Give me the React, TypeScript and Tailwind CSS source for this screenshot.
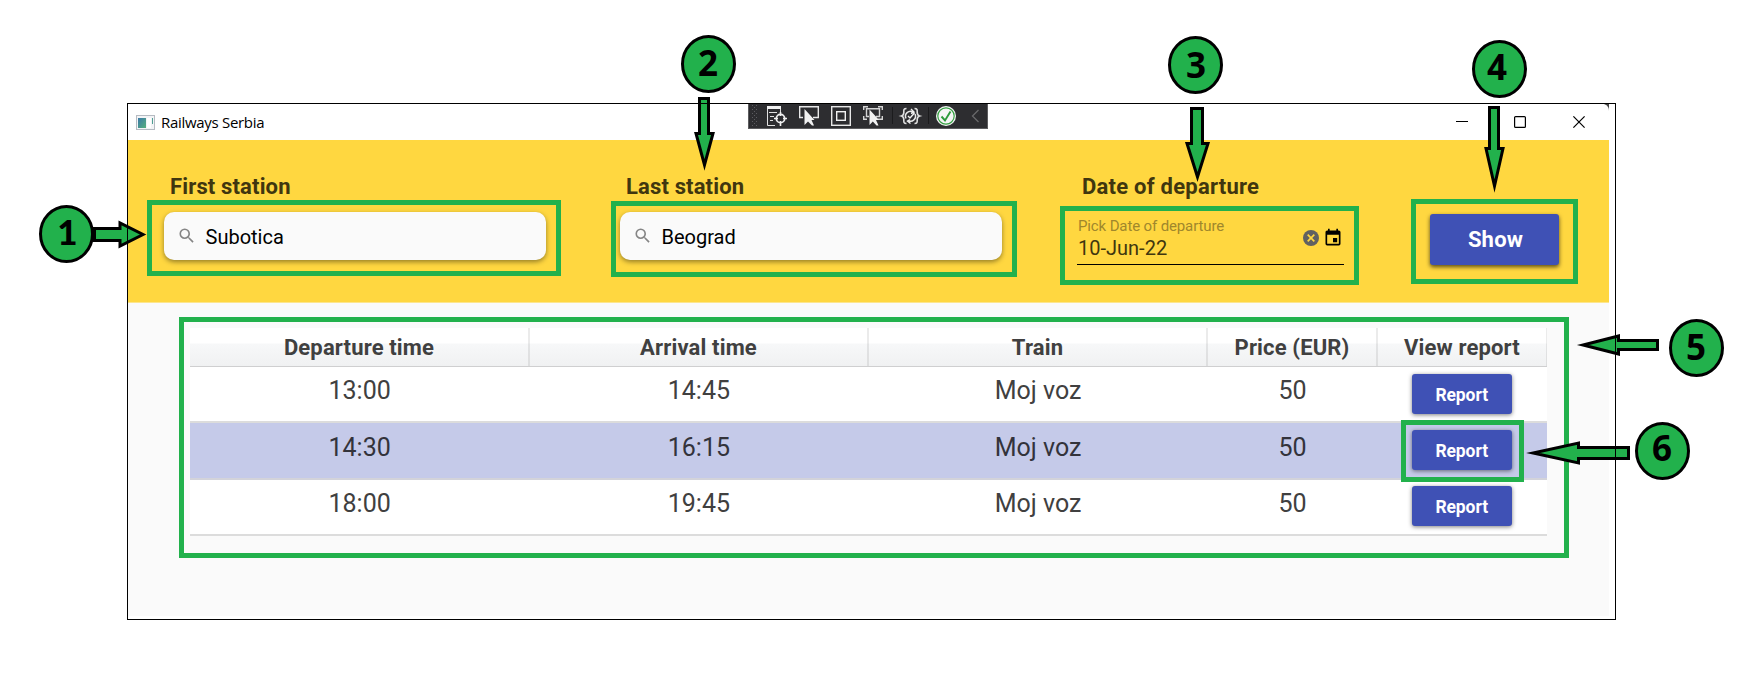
import React from "react";

const GREEN = "#22b14c";

type Point = [number, number];

const markers: { n: string; cx: number; cy: number; tx: number; base: number }[] = [
  { n: "1", cx: 66.5, cy: 234, tx: 67.3, base: 245 },
  { n: "2", cx: 708.5, cy: 64, tx: 708, base: 76 },
  { n: "3", cx: 1195.5, cy: 65, tx: 1196, base: 78 },
  { n: "4", cx: 1499.5, cy: 69, tx: 1497, base: 80 },
  { n: "5", cx: 1696.5, cy: 348, tx: 1696, base: 360 },
  { n: "6", cx: 1662.5, cy: 451, tx: 1662, base: 461 },
];

const arrows: Point[][] = [
  [[94.5, 228.5], [120, 228.5], [120, 223], [143, 234.5], [120, 246], [120, 240.5], [94.5, 240.5]],
  [[699.5, 98.5], [708.5, 98.5], [708.5, 133.5], [713, 133.5], [704.5, 165], [696, 133.5], [699.5, 133.5]],
  [[1191.5, 108.5], [1202.5, 108.5], [1202.5, 143.5], [1208, 143.5], [1197.5, 177], [1187, 143.5], [1191.5, 143.5]],
  [[1489.5, 107.5], [1498.5, 107.5], [1498.5, 148.5], [1503, 148.5], [1494.5, 186], [1486, 148.5], [1489.5, 148.5]],
  [[1657.5, 340.5], [1618.5, 340.5], [1618.5, 336], [1583, 345], [1618.5, 354], [1618.5, 349.5], [1657.5, 349.5]],
  [[1628.5, 447.5], [1578.5, 447.5], [1578.5, 443], [1533, 453], [1578.5, 463], [1578.5, 458.5], [1628.5, 458.5]],
];

const frames = [
  "left-[147px] top-[200px] w-[414px] h-[76px]",
  "left-[611px] top-[201px] w-[406px] h-[76px]",
  "left-[1060px] top-[206px] w-[299px] h-[79px]",
  "left-[1411px] top-[199px] w-[167px] h-[85px]",
  "left-[179px] top-[317px] w-[1390px] h-[241px]",
  "left-[1401px] top-[420px] w-[123px] h-[62px]",
];

const trips = [
  { departure: "13:00", arrival: "14:45", train: "Moj voz", price: "50", selected: false },
  { departure: "14:30", arrival: "16:15", train: "Moj voz", price: "50", selected: true },
  { departure: "18:00", arrival: "19:45", train: "Moj voz", price: "50", selected: false },
];

function Annotations() {
  return (
    <>
      {frames.map((f) => (
        <div key={f} className={`absolute border-5 border-[#22b14c] ${f}`} />
      ))}
      <svg className="absolute left-0 top-0" width="1744" height="686" viewBox="0 0 1744 686">
        {arrows.map((pts, i) => (
          <polygon key={i} points={pts.map((p) => p.join(",")).join(" ")} fill={GREEN} stroke="#000" strokeWidth="3" strokeMiterlimit="6" />
        ))}
        {markers.map((m) => (
          <g key={m.n}>
            <ellipse cx={m.cx} cy={m.cy} rx="26" ry="27.5" fill={GREEN} stroke="#000" strokeWidth="3" />
            <text
              x={m.tx}
              y={m.base}
              textAnchor="middle"
              fontFamily={m.n === "1" ? "Lato, sans-serif" : "Open Sans, sans-serif"}
              fontWeight={m.n === "1" ? 900 : 700}
              fontSize="35"
            >
              {m.n}
            </text>
          </g>
        ))}
        <path d="M127.5 220V250M690 103.5H720M1615.5 330V360M1615.5 440V470" stroke="#000" />
      </svg>
    </>
  );
}

function DebugToolbar() {
  return (
    <div className="absolute left-[620px] top-0 h-[25px] w-[240px] border border-t-0 border-[#5c5c5e] bg-[#2d2d30]">
      <svg className="block" width="238" height="24" viewBox="749 104 238 24" fill="none">
        <defs>
          <pattern id="grip" x="752" y="105" width="4" height="4" patternUnits="userSpaceOnUse">
            <rect width="1" height="1" fill="#5c5c60" />
            <rect x="2" y="2" width="1" height="1" fill="#5c5c60" />
          </pattern>
        </defs>
        <rect x="752" y="105" width="6" height="21" fill="url(#grip)" />
        <g>
          <rect x="767" y="106" width="14" height="3" fill="#f1f1f1" />
          <path d="M767.5 109V125.5H775M769 112.5H777M770 116.5H774M770 120.5H773M780.5 109V112" stroke="#e0e0e0" />
          <circle cx="780.5" cy="118.5" r="4.2" stroke="#f1f1f1" strokeWidth="1.7" />
          <path d="M780.5 112V116M780.5 121V126M774 118.5H778M783 118.5H787" stroke="#f1f1f1" strokeWidth="1.6" />
        </g>
        <path d="M803 117.5H799.7V106.7H818.3V117.5H813" stroke="#e8e8e8" strokeWidth="1.4" />
        <path d="M804.5 109V125L808 121.5L812 125.5H814L811.5 120H814.5Z" fill="#f1f1f1" />
        <rect x="831.7" y="106.7" width="18.6" height="18.6" stroke="#e8e8e8" strokeWidth="1.4" />
        <rect x="836.7" y="111.7" width="8.6" height="8.6" stroke="#f1f1f1" strokeWidth="1.4" />
        <path d="M863.7 110V106.7H868M878 106.7H882.3V110M863.7 116V119.3H867M882.3 116V119.3H878" stroke="#d5d5d5" strokeWidth="1.4" />
        <path d="M869 116.5H866.5V108.7H879.5V116.5H876" stroke="#d5d5d5" strokeWidth="1.4" />
        <path d="M869.5 109.5V125L872.8 121.6L876.5 125.5H878.5L876 120H879Z" fill="#f1f1f1" />
        <path d="M892.5 107V124M928.5 107V124" stroke="#1b1b1d" />
        <path d="M906.5 108.5C903.5 108.5 903.8 110 903.8 112.5C903.8 115 903.3 115.5 901.5 116C903.3 116.5 903.8 117 903.8 119.5C903.8 122 903.5 123.5 906.5 123.5M914.5 108.5C917.5 108.5 917.2 110 917.2 112.5C917.2 115 917.7 115.5 919.5 116C917.7 116.5 917.2 117 917.2 119.5C917.2 122 917.5 123.5 914.5 123.5" stroke="#e0e0e0" strokeWidth="1.6" />
        <path d="M906 118.5A5 5 0 0 1 913 112M915 114A5 5 0 0 1 908 120.5" stroke="#e8e8e8" strokeWidth="1.5" />
        <path d="M908 116L910 118L914.5 113M911 109L914 112L911 113.5M910 119.5L907.5 121L910.5 123.5" stroke="#f1f1f1" strokeWidth="1.4" />
        <circle cx="946" cy="116" r="10" fill="#f5f5f5" />
        <circle cx="946" cy="116" r="8.2" stroke="#36a043" strokeWidth="1.2" />
        <path d="M941.5 116.5L945 120.5L950.5 111.5" stroke="#2c9a3a" strokeWidth="1.9" />
        <path d="M978.5 110L972.5 116L978.5 122" stroke="#68686a" strokeWidth="1.3" />
      </svg>
    </div>
  );
}

function TitleBar() {
  return (
    <div className="relative flex h-9 items-center bg-white pl-2">
      <svg width="19" height="15" viewBox="0 0 19 15">
        <defs>
          <linearGradient id="app" x1="0" y1="0" x2="1" y2="1">
            <stop offset="0" stopColor="#3b79a8" />
            <stop offset="1" stopColor="#56b07c" />
          </linearGradient>
        </defs>
        <rect x=".5" y=".5" width="18" height="14" fill="#f3f4f6" stroke="#b6bbc2" />
        <rect x="2" y="3" width="8" height="10" fill="url(#app)" />
        <rect x="11" y="3" width="4" height="10" fill="#fff" />
        <rect x="16" y="3" width="1" height="6" fill="#4f9f93" />
      </svg>
      <span className="ml-[6px] font-['Open_Sans',sans-serif] text-[15px] leading-5 tracking-[-0.3px] text-black">Railways Serbia</span>
      <DebugToolbar />
      <svg className="ml-auto mr-[24px]" width="129" height="12" viewBox="0 0 129 12" fill="none" stroke="#000">
        <path d="M0 5.5H12" />
        <rect x="58.6" y=".6" width="10.8" height="10.8" rx="1" strokeWidth="1.2" />
        <path d="M117.4 .4L128.6 11.6M128.6 .4L117.4 11.6" strokeWidth="1.2" />
      </svg>
      <svg className="absolute right-0 top-0" width="5" height="7" viewBox="0 0 5 7">
        <path d="M0 0H5V7C5 3 3 1 0 0Z" fill="#444" />
      </svg>
    </div>
  );
}

function SearchField({ label, value }: { label: string; value: string }) {
  return (
    <div className="w-[382px]">
      <div className="pl-[6px] pt-px text-[22px] font-bold leading-7 tracking-[0.15px] text-[#40360f]">{label}</div>
      <div className="mt-[11px] flex h-12 items-center rounded-[10px] bg-[#fafafa] pl-[13px] shadow-[0_2px_5px_rgba(0,0,0,0.42)]">
        <svg width="19.5" height="19.5" viewBox="0 0 24 24" fill="#858585">
          <path d="M9.5 3A6.5 6.5 0 0 1 16 9.5c0 1.61-.59 3.09-1.56 4.23l.27.27h.79l5 5-1.5 1.5-5-5v-.79l-.27-.27A6.516 6.516 0 0 1 9.5 16 6.5 6.5 0 0 1 3 9.5 6.5 6.5 0 0 1 9.5 3m0 2C7 5 5 7 5 9.5S7 14 9.5 14 14 12 14 9.5 12 5 9.5 5Z" />
        </svg>
        <span className="ml-[9px] pt-[2px] text-[20px] text-black">{value}</span>
      </div>
    </div>
  );
}

function DateField() {
  return (
    <div className="w-[268px]">
      <div className="pl-[6px] pt-px text-[22px] font-bold leading-7 tracking-[0.24px] text-[#40360f]">Date of departure</div>
      <div className="ml-px mt-[11px] flex h-[53px] items-start justify-between border-b border-black">
        <div className="pl-px pt-[5px] text-[#40360f]">
          <div className="text-[15px] leading-[18px] tracking-[-0.13px] text-[#a0872c]">Pick Date of departure</div>
          <div className="pt-px text-[20px] leading-6">10-Jun-22</div>
        </div>
        <div className="flex items-center gap-1 pr-[1px] pt-4">
          <svg width="16" height="16" viewBox="0 0 16 16">
            <circle cx="8" cy="8" r="8" fill="#616161" />
            <path d="M4.7 4.7L11.3 11.3M11.3 4.7L4.7 11.3" stroke="#ffd740" strokeWidth="1.7" />
          </svg>
          <svg width="20" height="20" viewBox="0 0 24 24">
            <path d="M19 19H5V8h14m-3-7v2H8V1H6v2H5c-1.11 0-2 .89-2 2v14a2 2 0 0 0 2 2h14a2 2 0 0 0 2-2V5c0-1.11-.9-2-2-2h-1V1m-1 11h-5v5h5v-5Z" />
          </svg>
        </div>
      </div>
    </div>
  );
}

const columns = ["Departure time", "Arrival time", "Train", "Price (EUR)", "View report"];

function TripTable() {
  return (
    <div className="ml-[62px] mt-[25px] w-[1357px] text-center">
      <div className="grid h-[39px] grid-cols-[340px_339px_339px_170px_169px] border-b border-[#cfcfd0] bg-[linear-gradient(#fff_0,#fff_15px,#f7f8f9_16px,#f0f1f2_38px)]">
        {columns.map((c) => (
          <div key={c} className="border-r-2 border-black/8 pt-1 text-[22px] font-bold leading-8 tracking-[0.15px] text-[#404040] last:border-r">
            {c}
          </div>
        ))}
      </div>
      {trips.map((t, row) => (
        <div
          key={t.departure}
          className={
            t.selected
              ? "grid h-[57px] grid-cols-[2fr_2fr_2fr_1fr_1fr] border-b-2 border-[#d3d3da] bg-[#c5cae9] text-[#33333b]"
              : "grid h-14 grid-cols-[2fr_2fr_2fr_1fr_1fr] border-b-2 border-[#dcdcdc] bg-white text-[#404040]"
          }
        >
          {[t.departure, t.arrival, t.train, t.price].map((v, i) => (
            <div key={i} className={t.selected ? "pt-[9px] text-[25px] leading-8" : "pt-2 text-[25px] leading-8"}>
              {v}
            </div>
          ))}
          <div className={row === 2 ? "flex justify-center pr-px pt-[6px]" : "flex justify-center pr-px pt-[7px]"}>
            <button className="h-10 w-[100px] rounded-[3px] bg-[#3f51b5] pt-[2px] text-[17.5px] font-bold tracking-[-0.1px] text-white shadow-[0_1px_4px_rgba(0,0,0,0.5)]">
              Report
            </button>
          </div>
        </div>
      ))}
    </div>
  );
}

export default function App() {
  return (
    <div className="relative h-[686px] w-[1744px] overflow-hidden bg-white pl-[127px] pt-[103px] font-[Roboto,sans-serif]">
      <div className="h-[517px] w-[1489px] border border-black bg-white">
        <div className="w-[1481px]">
          <TitleBar />
          <div className="flex h-[163px] border-b border-[#fde68d] bg-[#ffd740] pl-9 pt-8">
            <SearchField label="First station" value="Subotica" />
            <div className="ml-[74px]">
              <SearchField label="Last station" value="Beograd" />
            </div>
            <div className="ml-[74px]">
              <DateField />
            </div>
            <button className="ml-[86px] mt-[42px] h-[51px] w-[129px] rounded-[3px] bg-[#3f51b5] pl-[2px] text-[22px] font-bold tracking-[0.2px] text-white shadow-[0_2px_4px_rgba(0,0,0,0.65)]">
              Show
            </button>
          </div>
          <div className="flex h-[313px] items-start bg-[#fafafa]">
            <TripTable />
          </div>
        </div>
      </div>
      <Annotations />
    </div>
  );
}
